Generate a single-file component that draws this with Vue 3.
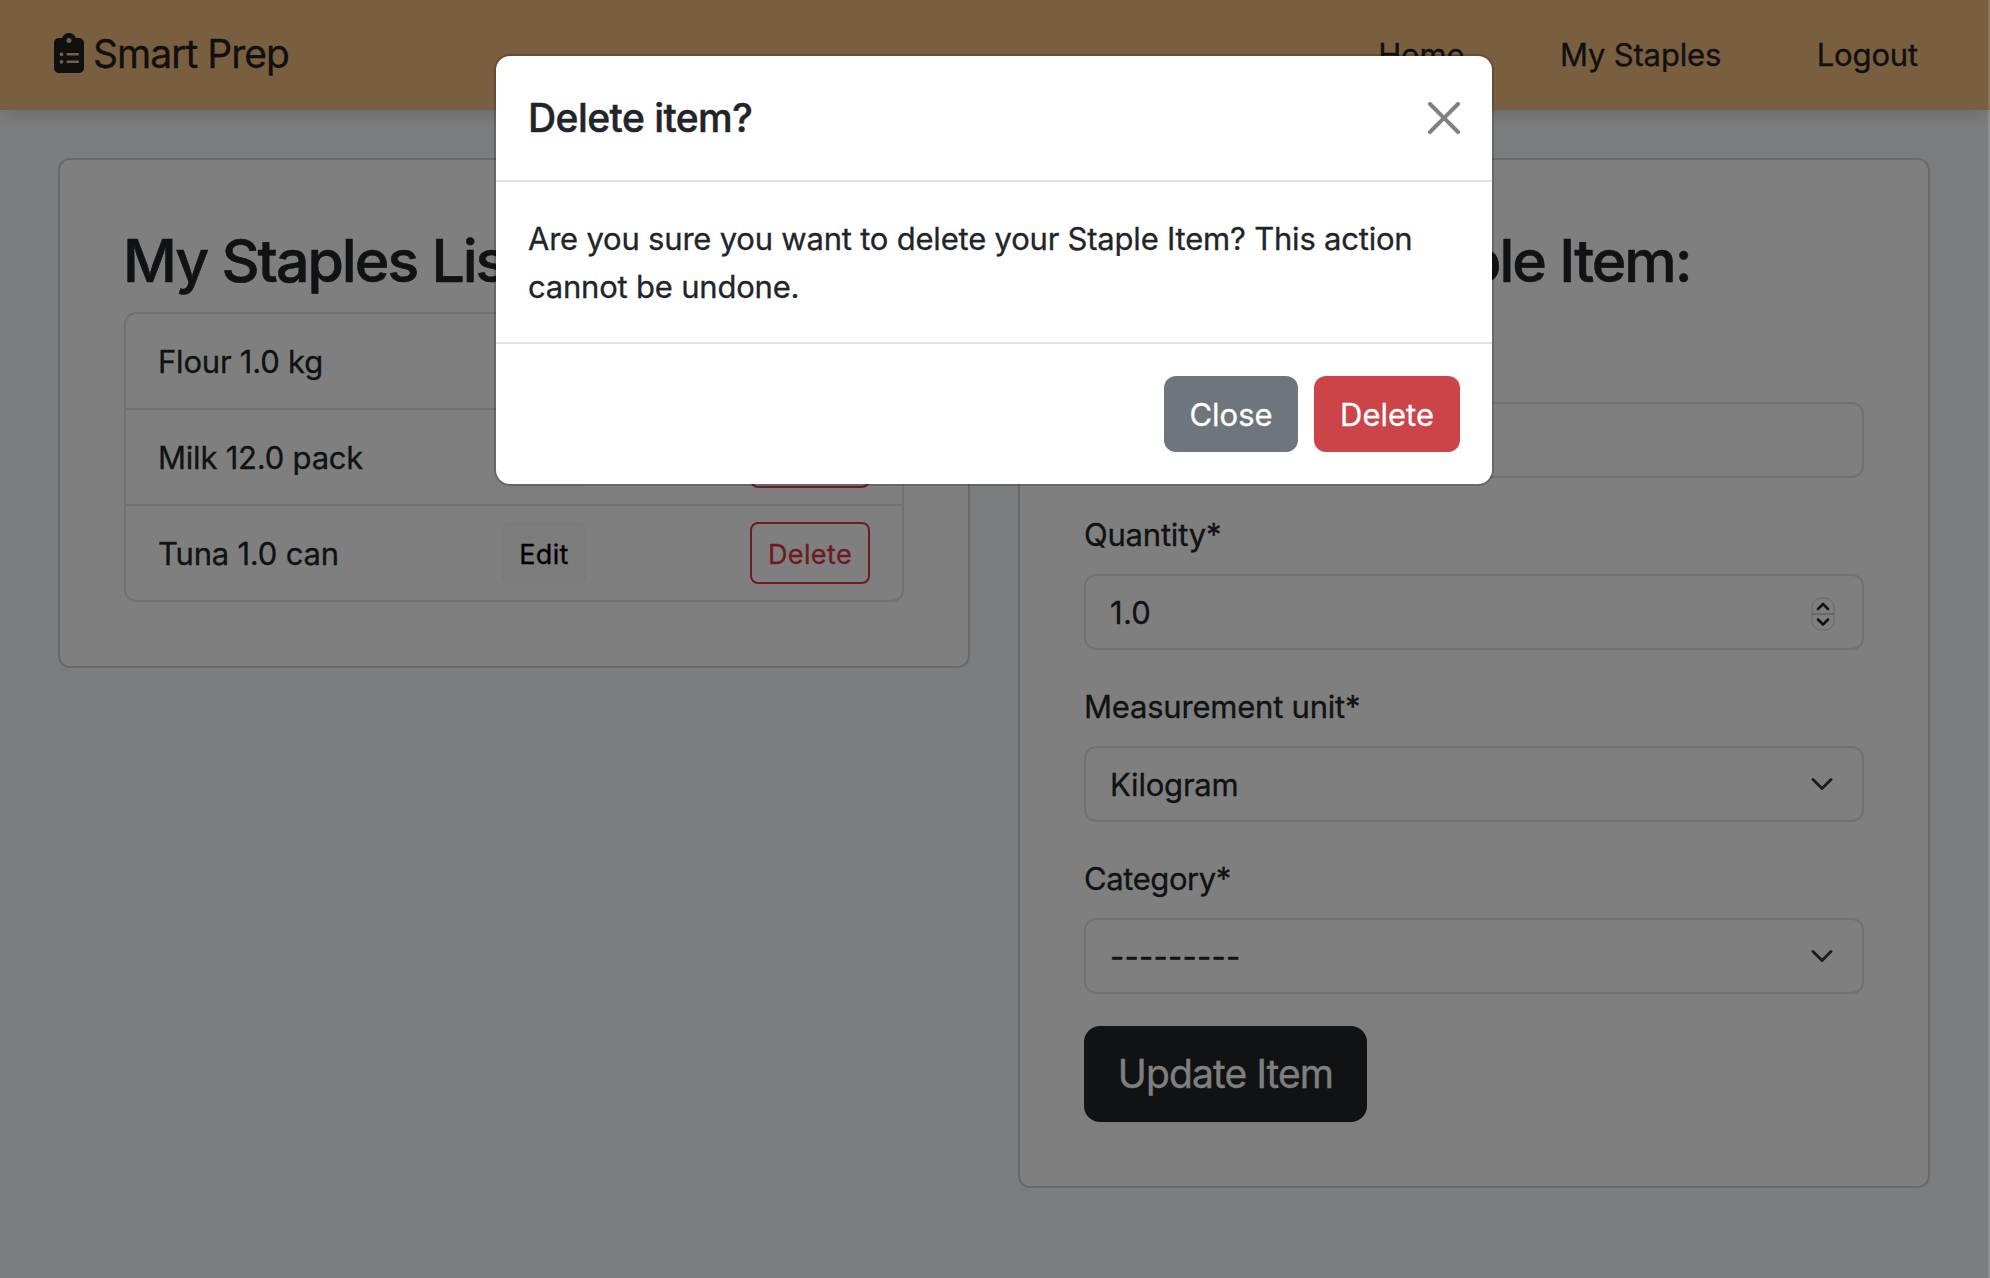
<script setup>
import { ref } from 'vue'

const links = ref(['Home', 'My Staples', 'Logout'])
const staples = ref([
  { id: 1, label: 'Flour 1.0 kg' },
  { id: 2, label: 'Milk 12.0 pack' },
  { id: 3, label: 'Tuna 1.0 can' },
])
</script>

<template>
  <div class="page">
    <header class="navbar">
      <a class="brand">
        <svg class="brand-icon" viewBox="0 0 384 512" width="30" height="40">
          <path
            fill="currentColor"
            d="M192 0c-41.8 0-77.4 26.7-90.5 64H64C28.7 64 0 92.7 0 128V448c0 35.3 28.7 64 64 64H320c35.3 0 64-28.7 64-64V128c0-35.3-28.7-64-64-64H282.5C269.4 26.7 233.8 0 192 0zm0 64a32 32 0 1 1 0 64 32 32 0 1 1 0-64zM72 272a24 24 0 1 1 48 0 24 24 0 1 1 -48 0zm104-16H304c8.8 0 16 7.2 16 16s-7.2 16-16 16H176c-8.8 0-16-7.2-16-16s7.2-16 16-16zM72 368a24 24 0 1 1 48 0 24 24 0 1 1 -48 0zm88 0c0-8.8 7.2-16 16-16H304c8.8 0 16 7.2 16 16s-7.2 16-16 16H176c-8.8 0-16-7.2-16-16z"
          />
        </svg>
        <span>Smart Prep</span>
      </a>
      <nav class="nav">
        <a v-for="link in links" :key="link">{{ link }}</a>
      </nav>
    </header>

    <main class="columns">
      <section class="card">
        <h2>My Staples List:</h2>
        <ul class="staples">
          <li v-for="item in staples" :key="item.id">
            <span class="name">{{ item.label }}</span>
            <button class="btn-sm btn-light">Edit</button>
            <button class="btn-sm btn-outline-danger">Delete</button>
          </li>
        </ul>
      </section>

      <section class="card">
        <h2 class="form-title">Update the Staple Item:</h2>
        <form class="form" @submit.prevent>
          <div class="field">
            <label>Name*</label>
            <div class="control"></div>
          </div>
          <div class="field">
            <label>Quantity*</label>
            <div class="control">
              <span class="number">1.0</span>
              <svg class="stepper" viewBox="0 0 24 34" width="24" height="34">
                <rect class="stepper-body" x="1" y="1" width="22" height="32" rx="9" />
                <path class="stepper-line" d="M1 17h22" />
                <path class="stepper-arrow" d="M7 12l5-5 5 5M7 22.5l5 5 5-5" />
              </svg>
            </div>
          </div>
          <div class="field">
            <label>Measurement unit*</label>
            <div class="control">
              <span>Kilogram</span>
              <svg class="chevron" viewBox="0 0 16 16" width="24" height="24">
                <path d="m2 5 6 6 6-6" />
              </svg>
            </div>
          </div>
          <div class="field">
            <label class="category">Category*</label>
            <div class="control">
              <span class="dashes">---------</span>
              <svg class="chevron" viewBox="0 0 16 16" width="24" height="24">
                <path d="m2 5 6 6 6-6" />
              </svg>
            </div>
          </div>
          <button class="btn-submit">Update Item</button>
        </form>
      </section>
    </main>

    <div class="backdrop"></div>

    <div class="modal" role="dialog">
      <div class="modal-header">
        <h5>Delete item?</h5>
        <svg class="close" viewBox="0 0 16 16" width="32" height="32">
          <path
            d="M.293.293a1 1 0 0 1 1.414 0L8 6.586 14.293.293a1 1 0 1 1 1.414 1.414L9.414 8l6.293 6.293a1 1 0 0 1-1.414 1.414L8 9.414l-6.293 6.293a1 1 0 0 1-1.414-1.414L6.586 8 .293 1.707a1 1 0 0 1 0-1.414z"
          />
        </svg>
      </div>
      <div class="modal-body">
        Are you sure you want to delete your Staple Item? This action cannot be undone.
      </div>
      <div class="modal-footer">
        <button class="btn btn-secondary">Close</button>
        <button class="btn btn-danger">Delete</button>
      </div>
    </div>
  </div>
</template>

<style>
body {
  margin: 0;
}
</style>

<style scoped>
* {
  box-sizing: border-box;
}

.page {
  position: relative;
  width: 1990px;
  height: 1278px;
  overflow: hidden;
  background: #f7f9fc;
  color: #212529;
  font-family: Inter, 'Liberation Sans', sans-serif;
  font-size: 31px;
  line-height: 48px;
  letter-spacing: -0.21px;
  -webkit-text-stroke: 0.3px currentColor;
}

button {
  font-family: inherit;
  margin: 0;
  -webkit-text-stroke: 0.3px currentColor;
}

.navbar {
  display: flex;
  align-items: center;
  justify-content: space-between;
  height: 110px;
  padding: 0 72px 0 54px;
  background: #f4bc80;
  color: #212121;
  box-shadow: 0 10px 16px -6px rgba(50, 70, 90, 0.21);
}

.brand {
  display: flex;
  align-items: center;
  gap: 9px;
  margin-bottom: 4px;
  font-size: 39px;
  letter-spacing: -0.98px;
}

.brand span {
  padding-top: 1px;
}

.brand-icon {
  display: block;
}

.nav {
  display: flex;
  gap: 95.5px;
  letter-spacing: -0.15px;
}

.columns {
  display: flex;
  align-items: flex-start;
  gap: 48px;
  padding: 48px 60px 0 58px;
}

.card {
  width: 912px;
  padding: 64px;
  border: 2px solid #d2d2d2;
  border-radius: 12px;
  background: #fff;
}

h2 {
  margin: 0 0 15px -1px;
  padding-top: 1px;
  font-size: 59px;
  font-weight: 500;
  line-height: 72px;
  letter-spacing: -2px;
  word-spacing: 0.5px;
  white-space: nowrap;
  -webkit-text-stroke: 0.6px currentColor;
}

.form-title {
  margin-left: -10px;
}

.staples {
  margin: 0;
  padding: 0;
  list-style: none;
  border: 2px solid #dee2e6;
  border-radius: 12px;
}

.staples li {
  display: flex;
  align-items: center;
  height: 94px;
  padding: 0 32px;
}

.staples li + li {
  height: 96px;
  border-top: 2px solid #dee2e6;
}

.name {
  width: 343px;
  padding-top: 2px;
}

.btn-sm {
  height: 62px;
  padding: 3px 0 0;
  border: 2px solid;
  border-radius: 8px;
  font-size: 27px;
  line-height: 42px;
  letter-spacing: 0.37px;
}

.btn-light {
  width: 86px;
  border-color: #f8f9fa;
  background: #f8f9fa;
  color: #000;
}

.btn-outline-danger {
  width: 120px;
  margin-left: auto;
  border-color: #dc3545;
  background: transparent;
  color: #dc3545;
}

.form {
  display: flex;
  flex-direction: column;
  align-items: stretch;
  gap: 32px;
  padding-top: 26px;
}

.field {
  display: flex;
  flex-direction: column;
  gap: 16px;
}

label {
  padding-top: 1px;
  margin-bottom: -1px;
}

.category {
  letter-spacing: -0.42px;
}

.control {
  display: flex;
  align-items: center;
  justify-content: space-between;
  height: 76px;
  padding: 0 28px 0 24px;
  border: 2px solid #dee2e6;
  border-radius: 12px;
  background: #fff;
}

.control span {
  padding-top: 2px;
}

.number {
  letter-spacing: 0.3px;
}

.dashes {
  letter-spacing: 0.24px;
}

.chevron path {
  fill: none;
  stroke: #343a40;
  stroke-width: 2;
  stroke-linecap: round;
  stroke-linejoin: round;
}

.stepper {
  margin: 3px -1px 0 0;
}

.stepper-body {
  fill: #fff;
  stroke: #d0d0d0;
  stroke-width: 1;
}

.stepper-line {
  stroke: #d2d2d2;
  stroke-width: 2;
}

.stepper-arrow {
  fill: none;
  stroke: #262626;
  stroke-width: 2.6;
  stroke-linecap: round;
  stroke-linejoin: round;
}

.btn-submit {
  align-self: flex-start;
  width: 283px;
  height: 96px;
  padding: 0;
  border: 0;
  border-radius: 16px;
  background: #212529;
  color: #fff;
  font-size: 39px;
  line-height: 60px;
  letter-spacing: -0.89px;
}

.backdrop {
  position: absolute;
  inset: 0;
  background: rgba(0, 0, 0, 0.5);
  border-right: 2px solid rgba(255, 255, 255, 0.13);
}

.modal {
  position: absolute;
  top: 54px;
  left: 494px;
  width: 1000px;
  border: 2px solid rgba(0, 0, 0, 0.175);
  border-radius: 16px;
  background: #fff;
  background-clip: padding-box;
}

.modal-header {
  display: flex;
  align-items: center;
  justify-content: space-between;
  padding: 32px;
  border-bottom: 2px solid #dee2e6;
}

.modal-header h5 {
  margin: 0;
  font-size: 39px;
  font-weight: 500;
  line-height: 60px;
  letter-spacing: -0.55px;
  -webkit-text-stroke: 0.5px currentColor;
}

.close {
  fill: #808080;
}

.modal-body {
  padding: 33px 32px 31px;
}

.modal-footer {
  display: flex;
  justify-content: flex-end;
  gap: 16px;
  padding: 32px;
  border-top: 2px solid #dee2e6;
}

.btn {
  height: 76px;
  padding: 2px 0 0;
  border: 0;
  border-radius: 12px;
  color: #fff;
  font-size: 31px;
  line-height: 48px;
  letter-spacing: 0;
}

.btn-secondary {
  width: 134px;
  background: #6e757d;
}

.btn-danger {
  width: 146px;
  background: #ca444a;
}
</style>
